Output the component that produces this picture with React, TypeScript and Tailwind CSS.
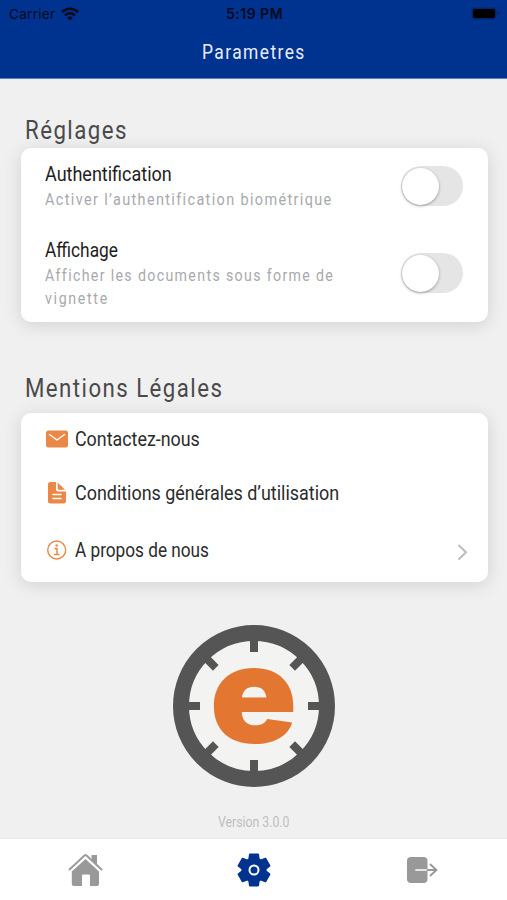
import type { ReactNode } from "react";
import clsx from "clsx";

/* Narrow lettering: regular glyphs squeezed horizontally */
function Narrow({ className, children }: { className?: string; children: ReactNode }) {
  return (
    <span className={clsx("block w-max origin-left whitespace-nowrap", className)}>
      {children}
    </span>
  );
}

function Toggle() {
  return (
    <button
      role="switch"
      aria-checked="false"
      className="flex h-10 w-[62px] shrink-0 items-center rounded-full bg-[#e5e5e5] pl-px"
    >
      <span className="h-[37px] w-[37px] rounded-full bg-white shadow-[0_1px_3px_rgba(0,0,0,0.35)]" />
    </button>
  );
}

function Card({ className, children }: { className?: string; children: ReactNode }) {
  return (
    <div className={clsx("ml-[20.5px] flex w-[467px] flex-col rounded-[10px] bg-white shadow-[0_3px_18px_rgba(0,0,0,0.13)]", className)}>
      {children}
    </div>
  );
}

function StatusBar() {
  return (
    <div className="flex h-7 items-center text-[#04091c]">
      <div className="flex flex-1 items-center gap-1.5 pl-[9px] font-[Inter] text-[13.5px]">
        <span className="tracking-[0.3px]">Carrier</span>
        <svg width="18" height="14" viewBox="0 0 18 14" fill="none" stroke="#04091c" strokeWidth="2.5">
          <path d="M1 5.2C5.5 .7 12.5 .7 17 5.2" />
          <path d="M4 8.4C7 5.6 11 5.6 14 8.4" />
          <path d="M9 13.5 6.2 10.7C7.8 9.2 10.2 9.2 11.8 10.7Z" fill="#04091c" stroke="none" />
        </svg>
      </div>
      <span className="pb-0.5 font-[Inter] text-[14px] font-semibold tracking-[0.5px]">5:19 PM</span>
      <div className="flex flex-1 justify-end pr-[7px]">
        <svg width="29" height="14" viewBox="0 0 29 14">
          <rect x="0.5" y="0.5" width="25" height="12" rx="3.5" fill="#04246b" />
          <rect x="2" y="2" width="22" height="9" rx="2" fill="#000" />
          <path d="M27 4.5v4q1.5-.7 1.5-2T27 4.5" fill="#04246b" />
        </svg>
      </div>
    </div>
  );
}

function Logo() {
  const ticks = [0, 45, 90, 135, 180, 225, 270, 315];
  return (
    <svg width="162" height="196" viewBox="0 -22 162 196" className="mx-auto shrink-0">
      <circle cx="81" cy="81" r="73" fill="#f3f3f2" stroke="#555" strokeWidth="16" />
      {ticks.map((angle) => (
        <rect key={angle} x="77" y="14" width="8" height="13" fill="#555" transform={`rotate(${angle} 81 81)`} />
      ))}
      <text
        x="0"
        y="0"
        transform="translate(80.5 117.5) scale(1.09 1.02)"
        textAnchor="middle"
        fontFamily="Inter, sans-serif"
        fontWeight="900"
        fontSize="133"
        fill="#e37732"
      >
        e
      </text>
    </svg>
  );
}

export default function App() {
  return (
    <div className="flex h-[900px] w-[507px] flex-col overflow-hidden bg-[#f0f0f0] font-[Roboto,sans-serif]">
      {/* Header */}
      <header className="h-[79px] shrink-0 border-b border-[#5f80bd] bg-[#00328f]">
        <StatusBar />
        <h1 className="flex h-[50px] items-center pl-[202px] text-[21px] text-[#e9eefa]">
          <Narrow className="scale-x-[0.83] tracking-[1.7px]">Parametres</Narrow>
        </h1>
      </header>

      <main className="flex flex-1 flex-col">
        {/* Settings */}
        <h2 className="mt-[34px] flex h-[35px] items-center pl-[25px] text-[26px] text-[#4a4a4a]">
          <Narrow className="scale-x-[0.855] tracking-[1.7px]">Réglages</Narrow>
        </h2>
        <Card className="h-[174px] pl-6 pr-[25px] pt-[14px]">
          <div className="flex h-[76px] items-start justify-between">
            <div>
              <Narrow className="scale-x-[0.9] text-[20px] leading-6 text-[#1d1d1d]">Authentification</Narrow>
              <Narrow className="scale-x-[0.85] pt-px text-[17px] leading-6 tracking-[1.6px] text-[#a9a9ad]">
                Activer l’authentification biométrique
              </Narrow>
            </div>
            <div className="-ml-20 pt-1">
              <Toggle />
            </div>
          </div>
          <div className="flex items-start justify-between">
            <div>
              <Narrow className="scale-x-[0.865] text-[20px] leading-6 text-[#1d1d1d]">Affichage</Narrow>
              <Narrow className="scale-x-[0.835] pt-[2px] text-[17px] leading-[23px] tracking-[1.6px] text-[#a9a9ad]">
                Afficher les documents sous forme de
                <br />
                <span className="tracking-[2px]">vignette</span>
              </Narrow>
            </div>
            <div className="-ml-20 pt-[15px]">
              <Toggle />
            </div>
          </div>
        </Card>

        {/* Legal */}
        <h2 className="mt-[45px] mb-[3px] flex h-[43px] items-center pl-[25px] text-[26px] text-[#4a4a4a]">
          <Narrow className="scale-x-[0.855] tracking-[1.7px]">Mentions Légales</Narrow>
        </h2>
        <Card className="h-[169px] pl-[23.5px] pr-5 text-[20px] text-[#2b2b2b]">
          <div className="flex h-[52px] items-center">
            <svg width="31" height="22" viewBox="0 0 31 22">
              <rect x="2" y="2.5" width="22" height="17" rx="2.5" fill="#ea8847" />
              <path d="M5.5 6.5 13 12l7.5-5.5" fill="none" stroke="#fff" strokeWidth="1.5" strokeLinecap="round" strokeLinejoin="round" />
            </svg>
            <Narrow className="scale-x-[0.893]">Contactez-nous</Narrow>
          </div>
          <div className="flex h-[55px] items-center">
            <svg width="31" height="24" viewBox="0 0 31 24">
              <path d="M6.5 1H12v7q0 2.5 2.5 2.5H22V20q0 2.5-2.5 2.5h-13Q4 22.5 4 20V3.5Q4 1 6.5 1Z" fill="#ea8847" />
              <path d="M13.7 1.5V7.5q0 1.3 1.3 1.3h6Z" fill="#ea8847" />
              <path d="M9 13.5h8M9 17.5h8" stroke="#fff" strokeWidth="1.5" strokeLinecap="round" />
            </svg>
            <Narrow className="scale-x-[0.896]">Conditions générales d’utilisation</Narrow>
          </div>
          <div className="flex h-[60px] items-center">
            <svg width="31" height="22" viewBox="0 0 31 22" fill="none" stroke="#ea8847">
              <circle cx="12.7" cy="11" r="9" strokeWidth="1.4" />
              <path d="M10.5 9.5h2.5v6M10 15.5h5.5" strokeWidth="1.5" />
              <circle cx="12.7" cy="6.5" r="1.2" fill="#ea8847" stroke="none" />
            </svg>
            <Narrow className="scale-x-[0.86]">A propos de nous</Narrow>
            <svg width="11" height="18" viewBox="0 0 11 18" className="ml-auto mt-1" fill="none" stroke="#bcbcbc" strokeWidth="2">
              <path d="M1.5 2 9 9.3 1.5 16.5" />
            </svg>
          </div>
        </Card>

        {/* Brand */}
        <div className="flex flex-col pt-[21px]">
          <Logo />
          <div className="mt-[11px] flex h-6 items-center pl-[218px] text-[14px] text-[#bebebe]">
            <Narrow className="scale-x-[0.875]">Version 3.0.0</Narrow>
          </div>
        </div>
      </main>

      {/* Tab bar */}
      <nav className="grid h-[62px] shrink-0 grid-cols-3 items-center border-t border-[#e8e8e8] bg-white">
        <svg width="36" height="36" viewBox="0 0 36 36" className="mx-auto" fill="#999">
          <path d="M4.8 19.5 18.5 7 32 19.5V32q0 2-2 2h-7V23.5q0-1-1-1h-6q-1 0-1 1V34H7q-2.2 0-2.2-2Z" />
          <path d="M2.5 17.5 17.5 3.5q1-.8 2 0l15 14" fill="none" stroke="#999" strokeWidth="1.9" strokeLinecap="round" />
          <path d="M24.5 3H30v9.5l-5.5-5Z" />
        </svg>
        <svg width="34" height="36" viewBox="0 0 34 36" className="mx-auto">
          <g fill="#00328f">
            <circle cx="17" cy="18" r="12.5" />
            {[0, 60, 120, 180, 240, 300].map((angle) => (
              <path
                key={angle}
                d="M13 1.5h8q.8 0 1 .8l1 6.7H11l1-6.7q.2-.8 1-.8Z"
                transform={`rotate(${angle} 17 18)`}
              />
            ))}
          </g>
          <circle cx="17" cy="18" r="4.5" fill="none" stroke="#fff" strokeWidth="2" />
        </svg>
        <svg width="36" height="30" viewBox="0 0 36 30" className="mx-auto">
          <rect x="2" y="2" width="20.5" height="26" rx="4" fill="#999" />
          <path d="M11 15h12" stroke="#fff" strokeWidth="1.7" strokeLinecap="round" />
          <path d="M22.5 15H31M25.5 9.5l6 5.5-6 5.5" fill="none" stroke="#999" strokeWidth="1.9" strokeLinecap="round" strokeLinejoin="round" />
        </svg>
      </nav>
    </div>
  );
}
